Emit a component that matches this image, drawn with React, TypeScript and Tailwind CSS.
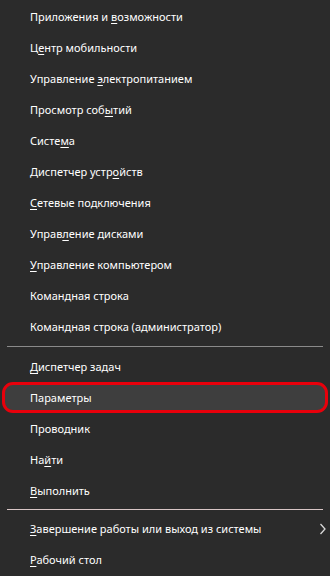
import React from "react";

type Item = { pre: string; key?: string; post?: string; highlight?: boolean; chevron?: boolean };

const g1: Item[] = [
  { pre: "Приложения и ", key: "в", post: "озможности" },
  { pre: "Ц", key: "е", post: "нтр мобильности" },
  { pre: "Управление ", key: "э", post: "лектропитанием" },
  { pre: "Просмотр соб", key: "ы", post: "тий" },
  { pre: "Систе", key: "м", post: "а" },
  { pre: "Диспетчер устр", key: "о", post: "йств" },
  { pre: "", key: "С", post: "етевые подключения" },
  { pre: "Управ", key: "л", post: "ение дисками" },
  { pre: "", key: "У", post: "правление компьютером" },
  { pre: "Командная строка" },
  { pre: "Командная строка (администратор)" },
];

const g2: Item[] = [
  { pre: "", key: "Д", post: "испетчер задач" },
  { pre: "Параметры", highlight: true },
  { pre: "Проводник" },
  { pre: "На", key: "й", post: "ти" },
  { pre: "", key: "В", post: "ыполнить" },
];

const g3: Item[] = [
  { pre: "", key: "З", post: "авершение работы или выход из системы", chevron: true },
  { pre: "", key: "Р", post: "абочий стол" },
];

function Row({ it }: { it: Item }) {
  return (
    <div
      className={
        "h-[31px] flex items-center justify-between " +
        (it.highlight
          ? "mx-[2px] pl-[25px] pr-[4px] bg-[#3e3e3e] border-[3px] border-[#e8000b] rounded-[11px]"
          : "pl-[30px] pr-[3px]")
      }
    >
      <span className="text-[11px] leading-none text-white whitespace-nowrap">
        {it.pre}
        {it.key ? <span className="underline underline-offset-2">{it.key}</span> : null}
        {it.post}
      </span>
      {it.chevron ? (
        <svg width="8" height="12" viewBox="0 0 8 12">
          <path d="M1.5 1 L6 6 L1.5 11" stroke="#d8d8d8" strokeWidth="1.3" fill="none" />
        </svg>
      ) : null}
    </div>
  );
}

export default function App() {
  return (
    <div
      className="w-[330px] h-[576px] bg-[#2b2b2b] overflow-hidden pt-[1px]"
      style={{ fontFamily: '"Noto Sans", "Open Sans", sans-serif' }}
    >
      {g1.map((it, i) => (
        <Row key={i} it={it} />
      ))}
      <div className="h-[9px] flex items-center px-[7px]">
        <div className="h-px w-full bg-[#8a8a8a]" />
      </div>
      {g2.map((it, i) => (
        <Row key={i} it={it} />
      ))}
      <div className="h-[7px] flex items-center px-[7px]">
        <div className="h-px w-full bg-[#d9c6c6]" />
      </div>
      {g3.map((it, i) => (
        <Row key={i} it={it} />
      ))}
    </div>
  );
}
